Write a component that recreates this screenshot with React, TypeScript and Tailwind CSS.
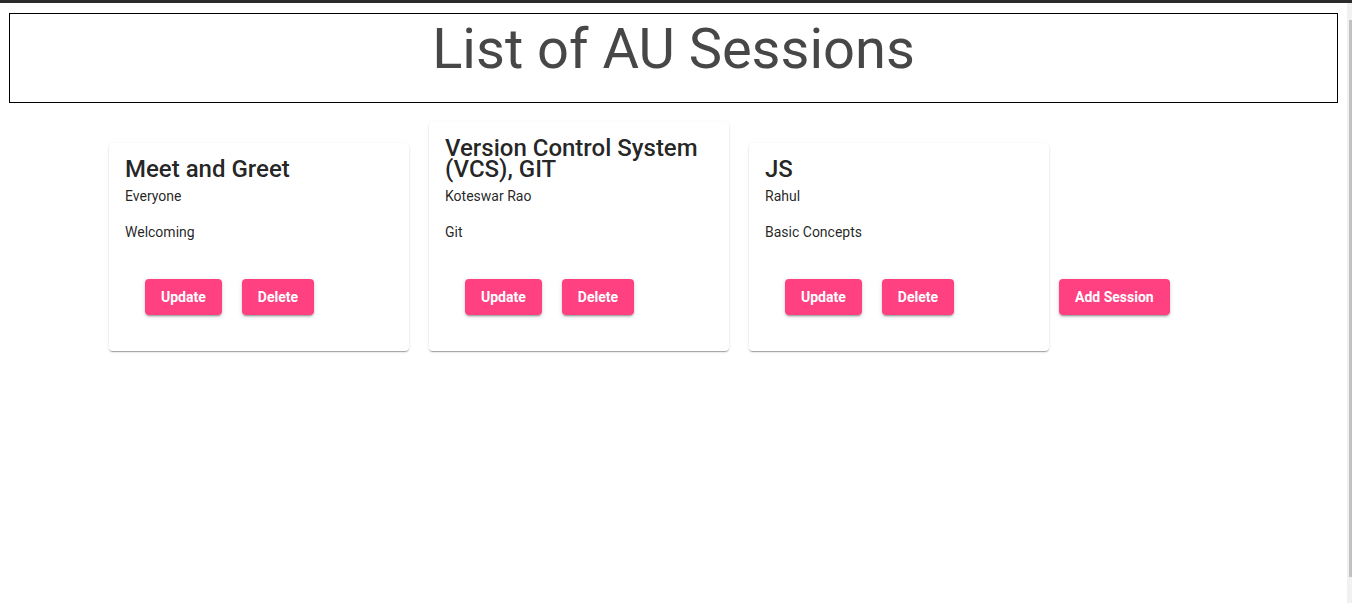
import React from "react";

type Session = { title: string; speaker: string; topic: string };

const sessions: Session[] = [
  { title: "Meet and Greet", speaker: "Everyone", topic: "Welcoming" },
  { title: "Version Control System (VCS), GIT", speaker: "Koteswar Rao", topic: "Git" },
  { title: "JS", speaker: "Rahul", topic: "Basic Concepts" },
];

function PinkButton({ children }: { children: React.ReactNode }) {
  return (
    <button className="h-9 px-4 rounded bg-[#ff4081] text-white text-sm font-bold leading-none shadow-[0px_3px_1px_-2px_rgba(0,0,0,0.2),0px_2px_2px_0px_rgba(0,0,0,0.14),0px_1px_5px_0px_rgba(0,0,0,0.12)]">
      {children}
    </button>
  );
}

function SessionCard({ session }: { session: Session }) {
  return (
    <div className="w-[300px] shrink-0 rounded bg-white p-4 pb-9 text-[rgba(0,0,0,0.87)] shadow-[0px_2px_1px_-1px_rgba(0,0,0,0.2),0px_1px_1px_0px_rgba(0,0,0,0.14),0px_1px_3px_0px_rgba(0,0,0,0.12)]">
      <h2 className="text-2xl leading-[20.5px] font-medium">{session.title}</h2>
      <p className="mt-[6.5px] text-sm leading-5">{session.speaker}</p>
      <p className="mt-4 text-sm leading-5">{session.topic}</p>
      <div className="mt-[37px] flex gap-5 pl-5">
        <PinkButton>Update</PinkButton>
        <PinkButton>Delete</PinkButton>
      </div>
    </div>
  );
}

export default function App() {
  return (
    <div className="h-[603px] flex flex-col bg-white font-['Roboto','Liberation_Sans',sans-serif]">
      <div className="h-[3px] bg-[#2b2b2b]" />
      <div className="flex flex-1 min-h-0">
        <main className="flex-1 pt-[10px]">
          <header className="mx-[9px] h-[90px] border border-black pt-[2px]">
            <h1 className="text-center text-[56px] leading-[67px] font-normal text-[#474747]">
              List of AU Sessions
            </h1>
          </header>
          <div className="mt-[19px] flex items-end gap-5 pl-[109px]">
            {sessions.map((s) => (
              <SessionCard key={s.title} session={s} />
            ))}
            <div className="-ml-[10px] mb-9">
              <PinkButton>Add Session</PinkButton>
            </div>
          </div>
        </main>
        <div className="w-[5px] bg-[#f1f1f1] flex justify-end">
          <div className="mt-[17px] h-[557px] w-[3px] bg-[#c1c1c1]" />
        </div>
      </div>
    </div>
  );
}
